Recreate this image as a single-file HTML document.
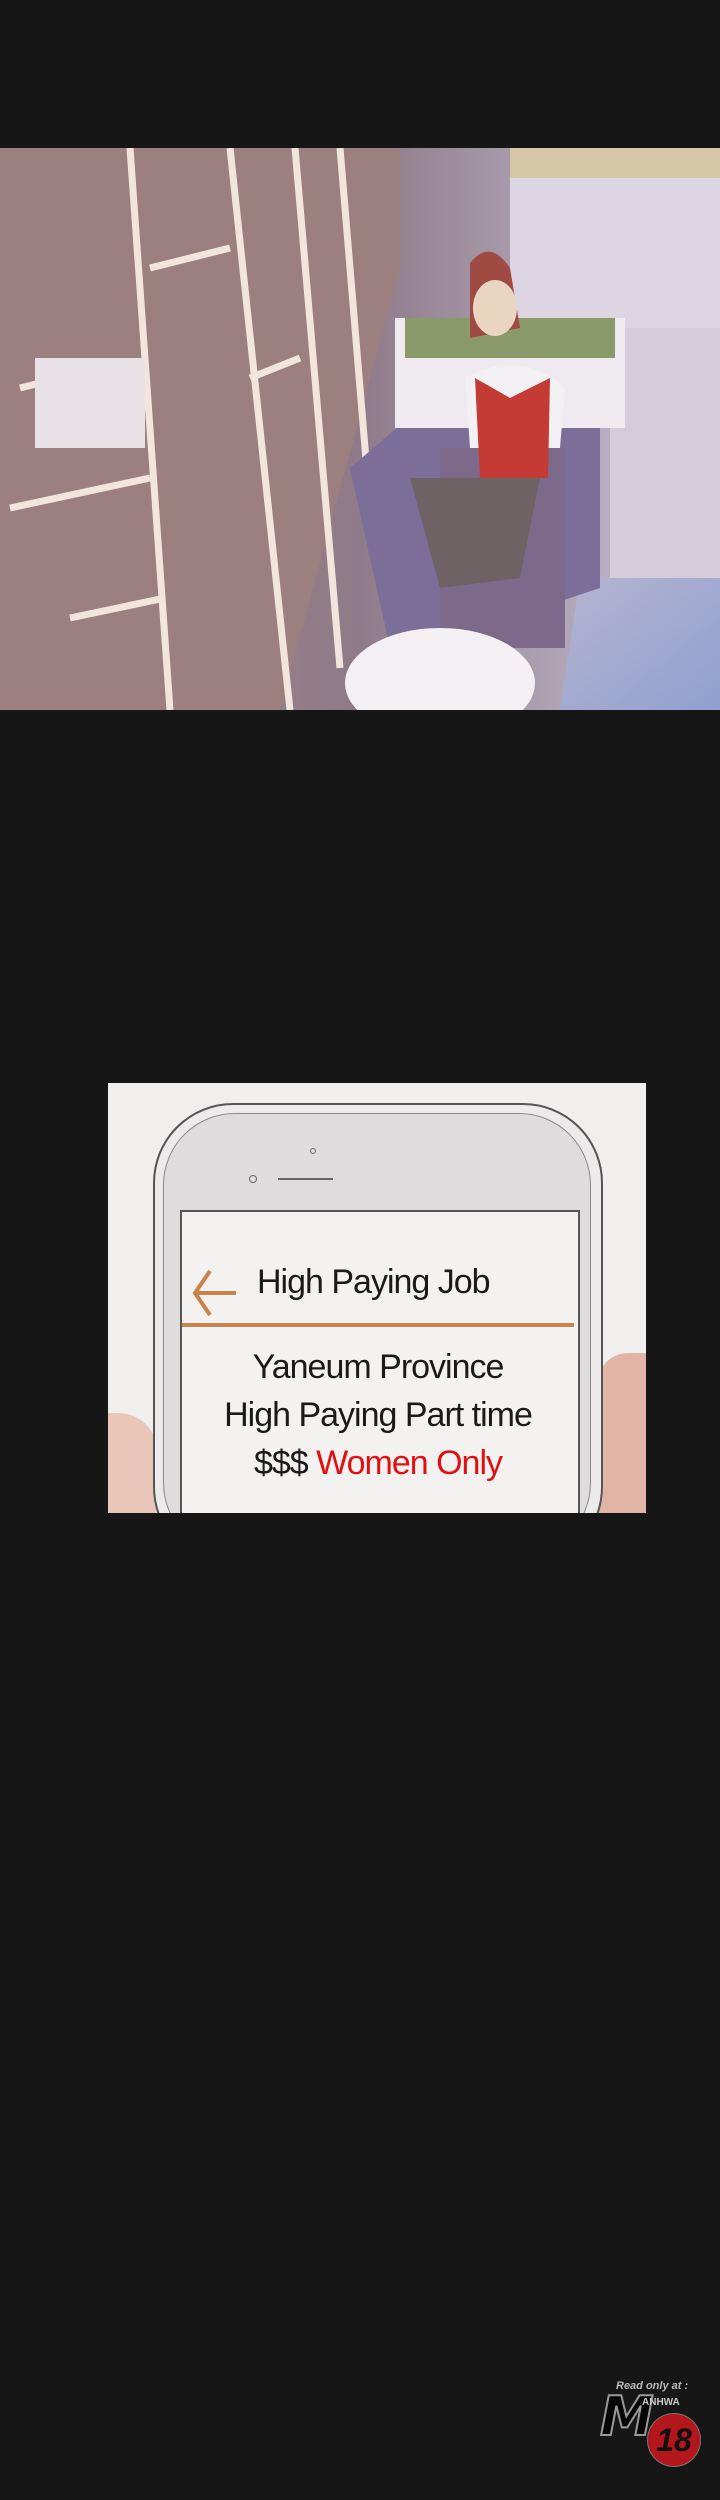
<!DOCTYPE html>
<html><head><meta charset="utf-8"><style>
body{margin:0;background:#161616;}
.page{position:relative;width:720px;height:2500px;background:#161616;overflow:hidden;font-family:"Liberation Sans",sans-serif;}
.abs{position:absolute;}
</style></head><body><div class="page">

<svg class="abs" style="left:0;top:148px" width="720" height="562" viewBox="0 0 720 562">
 <defs>
  <linearGradient id="bg" x1="0" y1="0" x2="1" y2="0"><stop offset="0" stop-color="#a98a86"/><stop offset="0.5" stop-color="#8f7a88"/><stop offset="1" stop-color="#c9c6d8"/></linearGradient>
  <linearGradient id="floor" x1="0" y1="0" x2="1" y2="1"><stop offset="0" stop-color="#b6b5d0"/><stop offset="1" stop-color="#8fa0d0"/></linearGradient>
 </defs>
 <rect width="720" height="562" fill="url(#bg)"/>
 <rect x="510" y="0" width="210" height="180" fill="#ddd6e2"/>
 <rect x="510" y="0" width="210" height="30" fill="#d6c7a6"/>
 <rect x="610" y="180" width="110" height="250" fill="#d4cbdb"/>
 <polygon points="580,430 720,430 720,562 560,562" fill="url(#floor)"/>
 <polygon points="0,0 400,0 400,120 280,562 0,562" fill="#9c7f7f"/>
 <g stroke="#f2e6dc" stroke-width="7" fill="none">
  <path d="M130 0 L170 562"/><path d="M230 0 L290 562"/><path d="M295 0 L340 520"/><path d="M340 0 L370 360"/>
  <path d="M10 360 L150 330"/><path d="M150 120 L230 100"/><path d="M20 240 L60 230"/><path d="M70 470 L165 450"/><path d="M250 230 L300 210"/>
 </g>
 <rect x="35" y="210" width="110" height="90" fill="#e8e2e6"/>
 <polygon points="350,320 420,260 600,270 600,440 540,460 390,500" fill="#7b6f9a"/>
 <rect x="395" y="170" width="230" height="110" fill="#eeeaf0"/>
 <rect x="405" y="170" width="210" height="40" fill="#8a9a6a"/>
 <rect x="440" y="300" width="125" height="200" fill="#7d6a8a"/>
 <path d="M465 230 Q520 200 565 240 L560 300 L470 300 Z" fill="#f2f0f2"/>
 <path d="M475 230 L510 250 L550 230 L548 330 L480 330 Z" fill="#c43a34"/>
 <path d="M470 115 Q490 90 510 120 L520 180 L470 190 Z" fill="#a04a44"/>
 <ellipse cx="495" cy="160" rx="22" ry="28" fill="#e9d5c0"/>
 <path d="M410 330 L540 330 L520 430 L440 440 Z" fill="#6f6265"/>
 <ellipse cx="440" cy="535" rx="95" ry="55" fill="#f4f0f4"/>
</svg>

<div class="abs" style="left:108px;top:1083px;width:538px;height:430px;background:#f0efee;overflow:hidden">
 <div class="abs" style="left:490px;top:270px;width:60px;height:170px;background:#e2b4a6;border-radius:30px 0 0 0"></div>
 <div class="abs" style="left:-20px;top:330px;width:70px;height:120px;background:#eac6b8;border-radius:0 40px 0 0"></div>
 <div class="abs" style="left:45px;top:20px;width:446px;height:460px;border:2px solid #555;border-radius:80px;background:#eceaea"></div>
 <div class="abs" style="left:55px;top:30px;width:426px;height:440px;border:1.5px solid #888;border-radius:72px;background:#dedcdc"></div>
 <div class="abs" style="left:202px;top:65px;width:4px;height:4px;border:1.5px solid #666;border-radius:50%"></div>
 <div class="abs" style="left:141px;top:92px;width:6px;height:6px;border:1.5px solid #666;border-radius:50%"></div>
 <div class="abs" style="left:170px;top:95px;width:55px;height:2px;background:#666"></div>
 <div class="abs" style="left:72px;top:127px;width:396px;height:320px;background:#f3f2f1;border:2px solid #555"></div>
 <svg class="abs" style="left:84px;top:183px" width="48" height="54"><path d="M44 27 L4 27 M18 5 L3 27 L18 49" stroke="#c8824a" stroke-width="4" fill="none"/></svg>
 <div class="abs" style="left:149px;top:180px;font-size:34px;color:#1a1a1a;letter-spacing:-1px">High Paying Job</div>
 <div class="abs" style="left:74px;top:240px;width:392px;height:4px;background:#c8824a"></div>
 <div class="abs" style="left:74px;width:392px;top:260px;text-align:center;font-size:34px;line-height:48px;color:#1a1a1a;letter-spacing:-1px">Yaneum Province<br>High Paying Part time<br>$$$ <span style="color:#e01010">Women Only</span></div>
</div>

<div class="abs" style="left:616px;top:2380px;font-size:11px;font-style:italic;font-weight:bold;color:#bbb">Read only at :</div>
<div class="abs" style="left:600px;top:2392px;font-size:54px;font-style:italic;font-weight:900;color:#050505;-webkit-text-stroke:2px #999;line-height:50px;font-family:'DejaVu Sans',sans-serif">M</div>
<div class="abs" style="left:642px;top:2397px;font-size:10px;font-weight:bold;color:#ccc">ANHWA</div>
<div class="abs" style="left:647px;top:2413px;width:52px;height:52px;border-radius:50%;background:#b3161b;border:1px solid #777;color:#111;font-size:32px;font-weight:bold;font-style:italic;text-align:center;line-height:52px">18</div>

</div></body></html>
